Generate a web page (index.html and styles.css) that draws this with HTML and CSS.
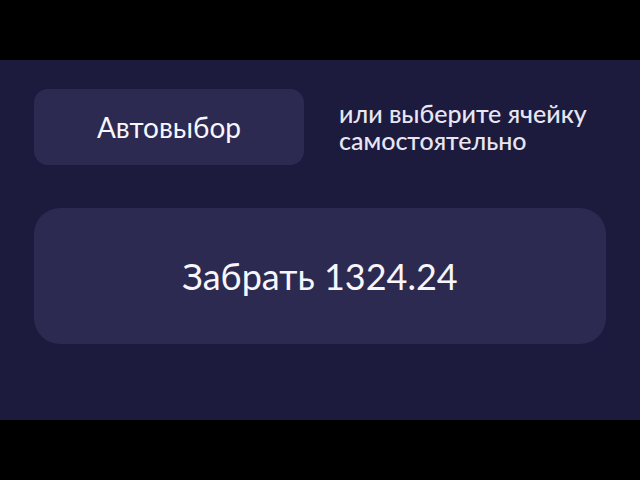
FILE: index.html
```html
<!DOCTYPE html>
<html lang="ru">
<head>
<meta charset="utf-8">
<link rel="stylesheet" href="styles.css">
</head>
<body>
<main class="panel">
  <div class="row">
    <button class="btn btn-auto">Автовыбор</button>
    <p class="hint">или выберите ячейку<br>самостоятельно</p>
  </div>
  <button class="btn btn-take">Забрать 1324.24</button>
</main>
</body>
</html>
```
FILE: styles.css
```css
html, body {
  margin: 0;
  padding: 0;
  background: #000;
  width: 640px;
  height: 480px;
  overflow: hidden;
}
.panel {
  margin-top: 60px;
  height: 360px;
  box-sizing: border-box;
  background: #1c1b3e;
  padding: 29px 34px 0 34px;
  font-family: "Lato", "Noto Sans", sans-serif;
  color: #f4f3fa;
}
.row {
  display: flex;
  align-items: flex-start;
  gap: 35px;
}
.btn {
  border: 0;
  background: #2c2a50;
  color: #f7f6fc;
  font-family: inherit;
  display: flex;
  align-items: center;
  justify-content: center;
  padding: 0;
}
.btn-auto {
  flex: none;
  width: 270px;
  height: 76px;
  border-radius: 14px;
  font-size: 28px;
}
.hint {
  margin: 11px 0 0 0;
  font-size: 25px;
  line-height: 27px;
  color: #e8e6f3;
  font-weight: 500;
  white-space: nowrap;
}
.btn-take {
  margin-top: 43px;
  width: 572px;
  height: 136px;
  border-radius: 26px;
  font-size: 36px;
}
```
